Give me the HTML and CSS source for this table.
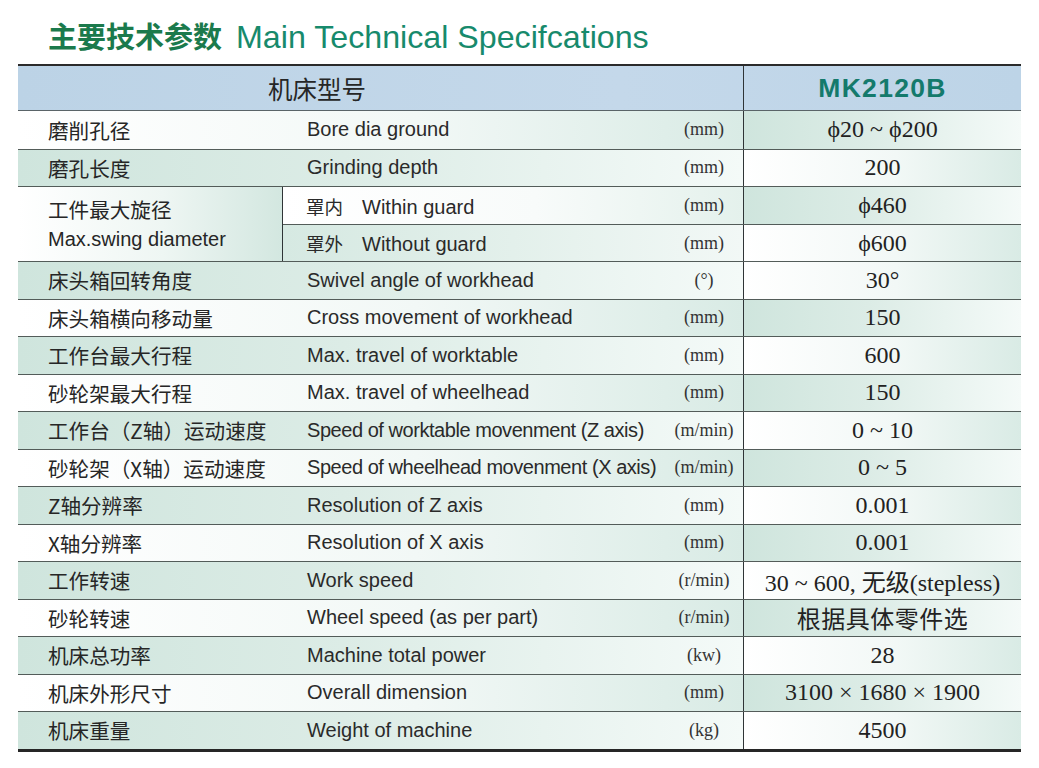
FILE: index.html
```html
<!DOCTYPE html>
<html lang="zh">
<head>
<meta charset="utf-8">
<title>主要技术参数 Main Technical Specifcations</title>
<link rel="stylesheet" href="styles.css">
</head>
<body>
<h1 class="title"><span class="title-zh">主要技术参数</span><span class="title-en">Main Technical Specifcations</span></h1>
<div class="spec">
  <div class="head">
    <div class="head-main">机床型号</div>
    <div class="head-val">MK2120B</div>
  </div>

  <div class="row first">
    <div class="main w"><div class="zh">磨削孔径</div><div class="en">Bore dia ground</div><div class="unit">(mm)</div></div>
    <div class="val g">ϕ20 ~ ϕ200</div>
  </div>
  <div class="row">
    <div class="main g"><div class="zh">磨孔长度</div><div class="en">Grinding depth</div><div class="unit">(mm)</div></div>
    <div class="val w">200</div>
  </div>
  <div class="group">
    <div class="zh2"><div class="zh-line">工件最大旋径</div><div class="en-line">Max.swing diameter</div></div>
    <div class="subs">
      <div class="sub">
        <div class="sub-main wl"><div class="en sub-en"><span class="guard">罩内</span>Within guard</div><div class="unit">(mm)</div></div>
        <div class="val g">ϕ460</div>
      </div>
      <div class="sub sub-2">
        <div class="sub-main gl"><div class="en sub-en"><span class="guard">罩外</span>Without guard</div><div class="unit">(mm)</div></div>
        <div class="val w">ϕ600</div>
      </div>
    </div>
  </div>
  <div class="row">
    <div class="main g"><div class="zh">床头箱回转角度</div><div class="en">Swivel angle of workhead</div><div class="unit">(°)</div></div>
    <div class="val w">30°</div>
  </div>
  <div class="row">
    <div class="main w"><div class="zh">床头箱横向移动量</div><div class="en">Cross movement of workhead</div><div class="unit">(mm)</div></div>
    <div class="val g">150</div>
  </div>
  <div class="row">
    <div class="main g"><div class="zh">工作台最大行程</div><div class="en">Max. travel of worktable</div><div class="unit">(mm)</div></div>
    <div class="val w">600</div>
  </div>
  <div class="row">
    <div class="main w"><div class="zh">砂轮架最大行程</div><div class="en">Max. travel of wheelhead</div><div class="unit">(mm)</div></div>
    <div class="val g">150</div>
  </div>
  <div class="row">
    <div class="main g"><div class="zh">工作台（Z轴）运动速度</div><div class="en tight">Speed of worktable movenment (Z axis)</div><div class="unit">(m/min)</div></div>
    <div class="val w">0 ~ 10</div>
  </div>
  <div class="row">
    <div class="main w"><div class="zh">砂轮架（X轴）运动速度</div><div class="en tight">Speed of wheelhead movenment (X axis)</div><div class="unit">(m/min)</div></div>
    <div class="val g">0 ~ 5</div>
  </div>
  <div class="row">
    <div class="main g"><div class="zh">Z轴分辨率</div><div class="en">Resolution of Z axis</div><div class="unit">(mm)</div></div>
    <div class="val w">0.001</div>
  </div>
  <div class="row">
    <div class="main w"><div class="zh">X轴分辨率</div><div class="en">Resolution of X axis</div><div class="unit">(mm)</div></div>
    <div class="val g">0.001</div>
  </div>
  <div class="row">
    <div class="main g"><div class="zh">工作转速</div><div class="en">Work speed</div><div class="unit">(r/min)</div></div>
    <div class="val w">30 ~ 600, 无级(stepless)</div>
  </div>
  <div class="row">
    <div class="main w"><div class="zh">砂轮转速</div><div class="en">Wheel speed (as per part)</div><div class="unit">(r/min)</div></div>
    <div class="val g val-zh">根据具体零件选</div>
  </div>
  <div class="row">
    <div class="main g"><div class="zh">机床总功率</div><div class="en">Machine total power</div><div class="unit">(kw)</div></div>
    <div class="val w">28</div>
  </div>
  <div class="row">
    <div class="main w"><div class="zh">机床外形尺寸</div><div class="en">Overall dimension</div><div class="unit">(mm)</div></div>
    <div class="val g">3100 × 1680 × 1900</div>
  </div>
  <div class="row">
    <div class="main g"><div class="zh">机床重量</div><div class="en">Weight of machine</div><div class="unit">(kg)</div></div>
    <div class="val w">4500</div>
  </div>
</div>
</body>
</html>
```

FILE: styles.css
```css
* { box-sizing: border-box; }
html, body { margin: 0; padding: 0; background: #ffffff; }
body { width: 1039px; height: 768px; overflow: hidden; color: #222; }

.title {
  margin: 0;
  padding: 16px 0 0 48px;
  height: 64px;
  line-height: 38px;
  font-weight: normal;
  white-space: nowrap;
}
.title-zh {
  font-family: "Noto Sans CJK SC", sans-serif;
  font-weight: 700;
  font-size: 29px;
  color: #1b7a4c;
}
.title-en {
  margin-left: 14px;
  font-family: "Liberation Sans", Arial, sans-serif;
  font-size: 32.2px;
  color: #178a6c;
}

.spec {
  margin-left: 18px;
  width: 1003px;
  border-top: 2px solid #2b2b2b;
  border-bottom: 3px solid #262626;
}

.head {
  display: flex;
  height: 45px;
  background: linear-gradient(90deg, #bcd3e6 0%, #c4d8ea 60%, #bdd4e7 100%);
  border-bottom: 1px solid #5a6468;
}
.head-main {
  width: 725px;
  padding-left: 250px;
  display: flex;
  align-items: center;
  font-family: "Noto Sans CJK SC", sans-serif;
  font-size: 24.5px;
  color: #262626;
}
.head-val {
  width: 278px;
  border-left: 1px solid #2f3436;
  display: flex;
  align-items: center;
  justify-content: center;
  font-family: "Liberation Sans", Arial, sans-serif;
  font-weight: 700;
  font-size: 26.5px;
  letter-spacing: 1.3px;
  color: #147a6c;
}

.row {
  display: flex;
  height: 37.5px;
  border-top: 1px solid #535c59;
}
.row.first { border-top: none; height: 37.5px; }

.main {
  width: 725px;
  display: flex;
  align-items: center;
}
.g { background: linear-gradient(90deg, #cfe5dd 0%, #dcece6 45%, #f4faf8 100%); }
.w { background: linear-gradient(90deg, #ffffff 0%, #f2f8f6 55%, #d9ebe5 100%); }
.wl { background: linear-gradient(90deg, #ffffff 0%, #f8fbfa 55%, #e4f1ec 100%); }
.gl { background: linear-gradient(90deg, #d6e9e2 0%, #e3f0eb 50%, #f2f8f6 100%); }

.zh {
  width: 265px;
  padding-left: 30px;
  font-family: "Noto Sans CJK SC", sans-serif;
  font-size: 20.6px;
  color: #262626;
  white-space: nowrap;
}
.en {
  width: 382px;
  padding-left: 24px;
  font-family: "Liberation Sans", Arial, "Noto Sans CJK SC", sans-serif;
  font-size: 20px;
  color: #2a2a2a;
  white-space: nowrap;
}
.en.tight { letter-spacing: -0.45px; }
.unit {
  width: 78px;
  text-align: center;
  font-family: "Liberation Serif", "Times New Roman", serif;
  font-size: 18px;
  color: #333;
  white-space: nowrap;
}
.val {
  width: 278px;
  border-left: 1px solid #2f3436;
  display: flex;
  align-items: center;
  justify-content: center;
  font-family: "Liberation Serif", "Times New Roman", "Noto Sans CJK SC", serif;
  font-size: 24px;
  color: #222;
  white-space: nowrap;
}
.val-zh {
  font-family: "Noto Sans CJK SC", serif;
  font-size: 24px;
  letter-spacing: 0.5px;
}

.group {
  display: flex;
  height: 75px;
  border-top: 1px solid #535c59;
}
.zh2 {
  width: 265px;
  padding-left: 30px;
  border-right: 1px solid #2f3436;
  background: linear-gradient(90deg, #ffffff 0%, #eef6f3 55%, #d3e7e0 100%);
  display: flex;
  flex-direction: column;
  justify-content: center;
  line-height: 30px;
  color: #262626;
  white-space: nowrap;
}
.zh-line {
  font-family: "Noto Sans CJK SC", sans-serif;
  font-size: 20.6px;
}
.en-line {
  font-family: "Liberation Sans", Arial, sans-serif;
  font-size: 20px;
}
.subs {
  width: 738px;
  display: flex;
  flex-direction: column;
}
.sub {
  display: flex;
  height: 37.5px;
}
.sub-2 { border-top: 1px solid #535c59; }
.sub-main {
  width: 460px;
  display: flex;
  align-items: center;
}
.sub-en { width: 382px; padding-left: 23px; }
.guard {
  font-family: "Noto Sans CJK SC", sans-serif;
  font-size: 18.5px;
  margin-right: 19px;
}
```
